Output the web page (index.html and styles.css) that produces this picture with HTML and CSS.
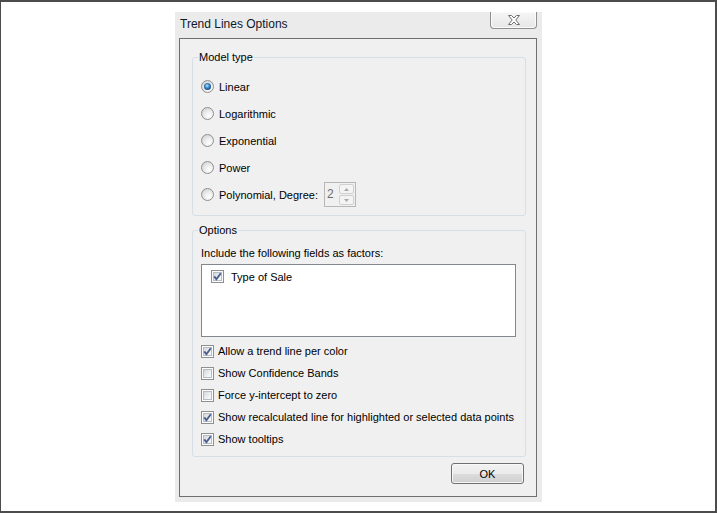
FILE: index.html
```html
<!DOCTYPE html>
<html lang="en">
<head>
<meta charset="utf-8">
<title>Trend Lines Options</title>
<link rel="stylesheet" href="styles.css">
</head>
<body>
<div class="screen">
  <div class="dialog">
    <div class="titlebar">
      <span class="title">Trend Lines Options</span>
      <button class="close" aria-label="Close">
        <svg width="14" height="10" viewBox="0 0 14 10"><path d="M1.5 0.5 H4.5 L7 3 L9.5 0.5 H12.5 L8.8 5 L12.5 9.5 H9.5 L7 7 L4.5 9.5 H1.5 L5.2 5 Z" fill="#fdfdfd" stroke="#6f6f6f" stroke-width="1" stroke-linejoin="round"/></svg>
      </button>
    </div>
    <div class="client">
      <fieldset class="group model">
        <legend>Model type</legend>
        <div class="row"><span class="radio on"></span><span>Linear</span></div>
        <div class="row"><span class="radio"></span><span>Logarithmic</span></div>
        <div class="row"><span class="radio"></span><span>Exponential</span></div>
        <div class="row"><span class="radio"></span><span>Power</span></div>
        <div class="row"><span class="radio"></span><span>Polynomial, Degree:</span>
          <span class="spin">
            <span class="spin-val">2</span>
            <span class="spin-btns">
              <span class="spin-btn"><svg width="5" height="3" viewBox="0 0 5 3"><path d="M0 3 L2.5 0 L5 3 Z" fill="#a8a8a8"/></svg></span>
              <span class="spin-btn"><svg width="5" height="3" viewBox="0 0 5 3"><path d="M0 0 L2.5 3 L5 0 Z" fill="#a8a8a8"/></svg></span>
            </span>
          </span>
        </div>
      </fieldset>
      <fieldset class="group options">
        <legend>Options</legend>
        <div class="caption">Include the following fields as factors:</div>
        <div class="listbox">
          <div class="item"><span class="check on"><svg width="13" height="13" viewBox="0 0 13 13"><path d="M3.3 6.4 L5.4 9.2 L9.8 3.2" fill="none" stroke="#4a5e8e" stroke-width="1.9"/></svg></span><span>Type of Sale</span></div>
        </div>
        <div class="crow"><span class="check on"><svg width="13" height="13" viewBox="0 0 13 13"><path d="M3.3 6.4 L5.4 9.2 L9.8 3.2" fill="none" stroke="#4a5e8e" stroke-width="1.9"/></svg></span><span>Allow a trend line per color</span></div>
        <div class="crow"><span class="check"></span><span>Show Confidence Bands</span></div>
        <div class="crow"><span class="check"></span><span>Force y-intercept to zero</span></div>
        <div class="crow"><span class="check on"><svg width="13" height="13" viewBox="0 0 13 13"><path d="M3.3 6.4 L5.4 9.2 L9.8 3.2" fill="none" stroke="#4a5e8e" stroke-width="1.9"/></svg></span><span>Show recalculated line for highlighted or selected data points</span></div>
        <div class="crow"><span class="check on"><svg width="13" height="13" viewBox="0 0 13 13"><path d="M3.3 6.4 L5.4 9.2 L9.8 3.2" fill="none" stroke="#4a5e8e" stroke-width="1.9"/></svg></span><span>Show tooltips</span></div>
      </fieldset>
      <div class="actions"><button class="btn">OK</button></div>
    </div>
  </div>
</div>
</body>
</html>
```
FILE: styles.css
```css
html, body {
  margin: 0;
  padding: 0;
}
body {
  background: #ffffff;
  font-family: "Liberation Sans", Arial, sans-serif;
  font-size: 11px;
  color: #000;
}
.screen {
  box-sizing: border-box;
  width: 717px;
  height: 513px;
  border: 2px solid #4c4c4c;
  border-left-width: 1px;
  padding: 10px 0 0 174px;
  display: flex;
  align-items: flex-start;
}
.dialog {
  width: 367px;
  height: 490px;
  background: #ebebeb;
  display: flex;
  flex-direction: column;
}
.titlebar {
  height: 26px;
  display: flex;
  justify-content: space-between;
  align-items: flex-start;
  flex: none;
}
.title {
  padding: 4px 0 0 5px;
  font-size: 12px;
  line-height: 16px;
  color: #10182a;
}
.close {
  width: 47px;
  height: 17px;
  margin: 0 5px 0 0;
  padding: 0;
  border: 1px solid #8e8e8e;
  border-top: none;
  border-radius: 0 0 4px 4px;
  background: linear-gradient(#f6f6f6, #e6e6e6);
  box-shadow: inset 0 0 0 1px #fbfbfb;
  display: flex;
  align-items: center;
  justify-content: center;
}
.client {
  flex: 1;
  margin: 0 5px 5px 4px;
  border: 1px solid #6f6f6f;
  background: #f0f0f0;
  display: flex;
  flex-direction: column;
  padding: 11px 10px 12px 12px;
}
.group {
  margin: 0;
  border: 1px solid #d5dfe5;
  border-radius: 3px;
  min-width: 0;
}
.group legend {
  margin-left: -3px;
  padding: 0 1px;
  line-height: 15px;
}
.model {
  padding: 8px 8px 7px;
}
.options {
  margin-top: 7px;
  padding: 8px 8px 6px;
}
.row {
  height: 27px;
  display: flex;
  align-items: center;
  gap: 5px;
}
.radio {
  width: 13px;
  height: 13px;
  box-sizing: border-box;
  border-radius: 50%;
  border: 1px solid #8f8f8f;
  background: radial-gradient(circle at 65% 70%, #ffffff 0%, #f0f0f0 35%, #d6d6d6 80%);
  position: relative;
  flex: none;
}
.radio.on::after {
  content: "";
  position: absolute;
  inset: 2px;
  border-radius: 50%;
  background: radial-gradient(circle at 45% 40%, #bfe7ff 0%, #3c8fd0 35%, #1a4f86 70%, #23344c 100%);
}
.spin {
  margin-left: 1px;
  width: 32px;
  height: 25px;
  box-sizing: border-box;
  border: 1px solid #b7b7b7;
  background: #f0f0f0;
  display: flex;
}
.spin-val {
  flex: 1;
  color: #6d6d6d;
  font-size: 12px;
  line-height: 22px;
  padding-left: 2px;
}
.spin-btns {
  width: 15px;
  display: flex;
  flex-direction: column;
  padding: 1px 1px 1px 0;
  gap: 1px;
}
.spin-btn {
  flex: 1;
  border: 1px solid #d0d0d0;
  border-radius: 2px;
  background: #f4f4f4;
  display: flex;
  align-items: center;
  justify-content: center;
}
.caption {
  line-height: 15px;
  margin-bottom: 3px;
}
.listbox {
  height: 73px;
  box-sizing: border-box;
  margin-right: 1px;
  border: 1px solid #828790;
  background: #ffffff;
  margin-bottom: 3px;
  padding: 5px 0 0 9px;
}
.item {
  display: flex;
  align-items: center;
  gap: 7px;
  height: 13px;
}
.crow {
  height: 22px;
  display: flex;
  align-items: center;
  gap: 4px;
}
.check {
  width: 13px;
  height: 13px;
  box-sizing: border-box;
  border: 1px solid #8f8f8f;
  background: #fdfdfd;
  position: relative;
  flex: none;
}
.check::before {
  content: "";
  position: absolute;
  inset: 1px;
  border: 1px solid #b6bcc4;
  background: linear-gradient(135deg, #d3d6da 0%, #eceef0 55%, #fafafa 100%);
}
.check svg {
  position: absolute;
  left: -1px;
  top: -1px;
}
.actions {
  margin-top: auto;
  display: flex;
  justify-content: flex-end;
  padding-right: 2px;
}
.btn {
  width: 73px;
  height: 21px;
  padding: 0;
  border: 1px solid #707070;
  border-radius: 3px;
  background: linear-gradient(#f2f2f2 0%, #ebebeb 50%, #dddddd 51%, #cfcfcf 100%);
  box-shadow: inset 0 0 0 1px #f8f8f8;
  font-family: inherit;
  font-size: 11px;
  color: #000;
}
```
